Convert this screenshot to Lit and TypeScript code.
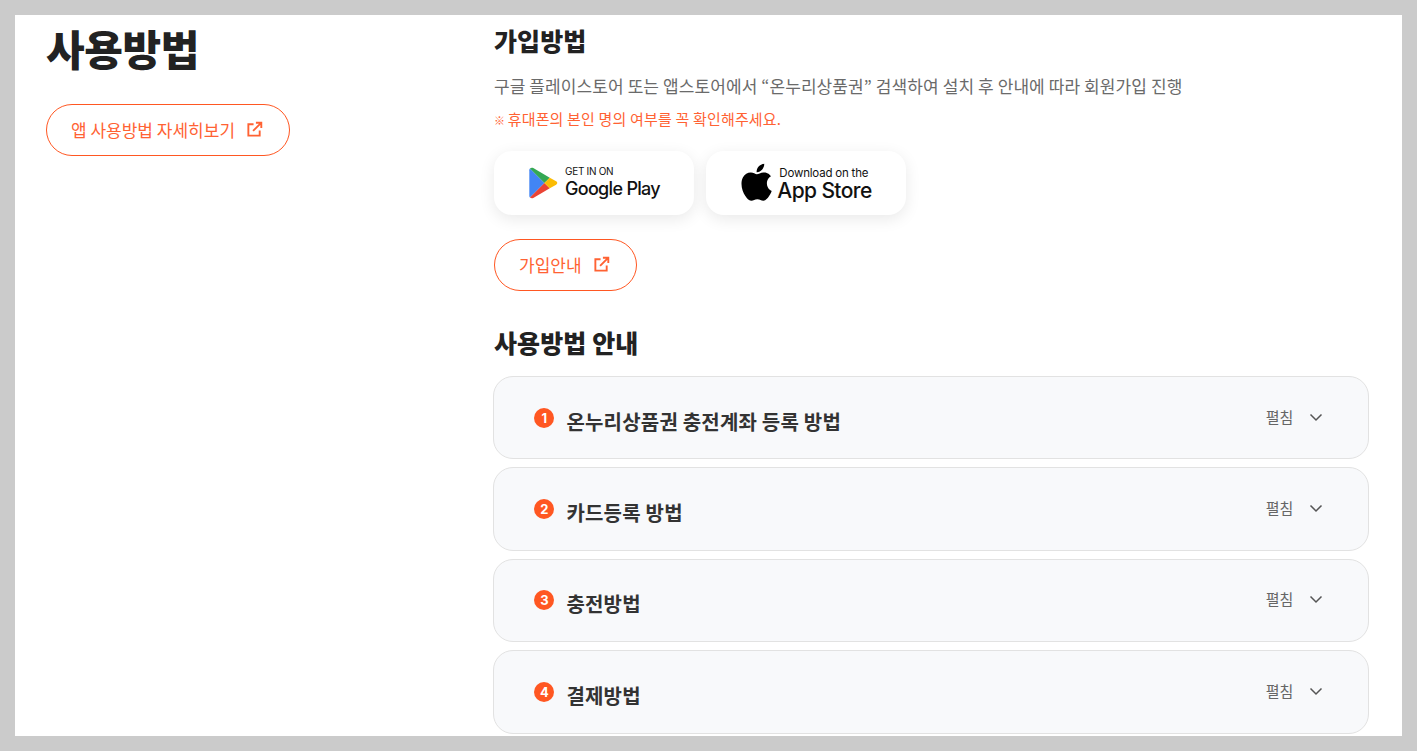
import { LitElement, css, html, svg } from 'lit';
import { customElement } from 'lit/decorators.js';

const linkIcon = html`<svg class="ext" viewBox="0 0 18 18" fill="none" stroke="currentColor" stroke-width="2">
  <path d="M8 3.500H2.500v12h12V10"/><path d="M7.500 10.500L16 2M10.500 1.800h5.700v5.700"/>
</svg>`;

const playIcon = svg`<svg class="play" viewBox="0 0 30 33">
  <path d="M1 1.500C.5 2 .3 2.600.3 3.400v26.200c0 .8.2 1.400.7 1.900L16 16.500z" fill="#4285f4"/>
  <path d="M1 1.500c1-.9 2.300-1 3.400-.4L21.500 11 16 16.500z" fill="#34a853"/>
  <path d="M1 31.500c1 .9 2.300 1 3.400.4L21.500 22 16 16.500z" fill="#ea4335"/>
  <path d="M21.500 11l6.600 3.800c1.500.9 1.500 2.500 0 3.400L21.500 22 16 16.500z" fill="#fbbc04"/>
</svg>`;

const appleIcon = svg`<svg class="apple" viewBox="3.500 3 27.500 33">
  <path fill="#000" d="M26.600 20.200c0-4 3.300-6 3.500-6.100-1.900-2.800-4.900-3.200-5.900-3.200-2.500-.3-4.900 1.500-6.200 1.500-1.300 0-3.200-1.500-5.300-1.400-2.700 0-5.200 1.600-6.600 4-2.800 4.900-.7 12.100 2 16.100 1.400 1.900 3 4.100 5.100 4 2-.1 2.800-1.300 5.200-1.300 2.400 0 3.100 1.300 5.200 1.300 2.200 0 3.600-2 4.900-3.900 1.500-2.200 2.200-4.400 2.200-4.500-.1 0-4.100-1.600-4.100-6.500z"/>
  <path fill="#000" d="M22.600 8.400c1.100-1.400 1.900-3.200 1.700-5.100-1.600.1-3.600 1.100-4.800 2.500-1 1.200-1.900 3.100-1.700 4.900 1.800.1 3.600-.9 4.800-2.300z"/>
</svg>`;

const steps = ['온누리상품권 충전계좌 등록 방법', '카드등록 방법', '충전방법', '결제방법'];

@customElement('app-root')
export class AppRoot extends LitElement {
  static styles = css`
    :host {
      display: block;
      box-sizing: border-box;
      height: 751px;
      overflow: hidden;
      border: 15px solid #cbcbcb;
      background: #fff;
      font-family: 'Noto Sans CJK KR', 'Noto Sans', sans-serif;
      color: #222;
    }
    .page {
      display: grid;
      grid-template-columns: 478px 876px;
      height: 100%;
      overflow: hidden;
    }
    .side {
      padding: 3px 0 0 31px;
    }
    h1 {
      margin: 0;
      font-size: 42px;
      line-height: 60px;
      font-weight: 900;
      letter-spacing: -0.4px;
      color: #222;
    }
    .outline {
      display: inline-flex;
      align-items: center;
      box-sizing: border-box;
      height: 52px;
      padding: 0 26px 2px 24px;
      border: 1px solid #ff5722;
      border-radius: 26px;
      background: #fff;
      color: #ff6233;
      font-size: 17px;
      font-weight: 400;
      white-space: nowrap;
    }
    .side .outline {
      margin-top: 26px;
    }
    .ext {
      width: 17px;
      height: 17px;
      margin: 1px 0 0 11px;
      flex: none;
    }
    .main {
      padding-top: 8px;
    }
    h2 {
      margin: 0 0 0 1px;
      font-size: 25px;
      line-height: 34px;
      font-weight: 800;
      letter-spacing: 0.1px;
      color: #222;
    }
    .desc {
      margin: 17px 0 0 1px;
      font-size: 17px;
      line-height: 24px;
      letter-spacing: 0.09px;
      color: #6a6a6a;
    }
    .warn {
      margin: 11px 0 0 1px;
      font-size: 15px;
      line-height: 20px;
      letter-spacing: 0.17px;
      color: #ff6233;
    }
    .mark {
      font-size: 11px;
      margin-right: -1px;
    }
    .stores {
      display: flex;
      gap: 12px;
      margin: 21px 0 0 1px;
    }
    .store {
      display: flex;
      align-items: center;
      justify-content: center;
      width: 200px;
      height: 64px;
      border-radius: 18px;
      background: #fff;
      box-shadow: 0 4px 16px rgba(0, 0, 0, 0.09);
      color: #111;
      font-family: Inter, Roboto, sans-serif;
    }
    .play {
      width: 29px;
      height: 32px;
      margin: 0 7px 0 1px;
    }
    .apple {
      width: 32px;
      height: 39px;
      margin: -1px 5px 0 0;
    }
    .store-text {
      display: flex;
      flex-direction: column;
    }
    .small {
      font-size: 10px;
      line-height: 11px;
      font-weight: 400;
      letter-spacing: -0.3px;
    }
    .big {
      font-size: 18px;
      line-height: 23px;
      font-weight: 500;
      letter-spacing: -0.7px;
    }
    .apple-text {
      padding-top: 3px;
    }
    .apple-text .small {
      font-size: 11.500px;
      line-height: 12px;
      margin-left: 2px;
      letter-spacing: -0.2px;
    }
    .apple-text .big {
      font-size: 21px;
      line-height: 24px;
      letter-spacing: -0.6px;
    }
    .join {
      margin: 24px 0 0 1px;
    }
    .guide {
      margin-top: 34px;
    }
    .list {
      display: flex;
      flex-direction: column;
      gap: 8px;
      margin-top: 17px;
    }
    .item {
      display: flex;
      align-items: center;
      box-sizing: border-box;
      height: 83.4px;
      padding: 0 43.600px 0 40.400px;
      border: 1px solid #e2e2e2;
      border-radius: 20px;
      background: #f8f9fb;
    }
    .num {
      display: flex;
      align-items: center;
      justify-content: center;
      width: 20px;
      height: 20px;
      margin: 0 12px 0 0;
      border-radius: 50%;
      background: #ff5722;
      color: #fff;
      font-size: 13px;
      font-weight: 700;
      line-height: 20px;
      font-family: Inter, sans-serif;
    }
    .name {
      flex: 1;
      margin-top: 8px;
      font-size: 20px;
      line-height: 30px;
      font-weight: 700;
      letter-spacing: 0.2px;
      color: #333;
    }
    .toggle {
      display: flex;
      align-items: center;
      gap: 15px;
      margin-top: -2px;
      font-size: 15px;
      line-height: 20px;
      color: #666;
    }
    .chev {
      width: 16px;
      height: 16px;
    }
  `;

  render() {
    return html`
      <div class="page">
        <aside class="side">
          <h1>사용방법</h1>
          <a class="outline">앱 사용방법 자세히보기${linkIcon}</a>
        </aside>
        <main class="main">
          <h2>가입방법</h2>
          <p class="desc">구글 플레이스토어 또는 앱스토어에서 “온누리상품권” 검색하여 설치 후 안내에 따라 회원가입 진행</p>
          <p class="warn"><span class="mark">※</span> 휴대폰의 본인 명의 여부를 꼭 확인해주세요.</p>
          <div class="stores">
            <div class="store">
              ${playIcon}
              <div class="store-text"><span class="small">GET IN ON</span><span class="big">Google Play</span></div>
            </div>
            <div class="store">
              ${appleIcon}
              <div class="store-text apple-text"><span class="small">Download on the</span><span class="big">App Store</span></div>
            </div>
          </div>
          <a class="outline join">가입안내${linkIcon}</a>
          <h2 class="guide">사용방법 안내</h2>
          <div class="list">
            ${steps.map(
              (s, i) => html`
                <div class="item">
                  <span class="num">${i + 1}</span>
                  <span class="name">${s}</span>
                  <span class="toggle">펼침
                    <svg class="chev" viewBox="0 0 16 16" fill="none" stroke="#555" stroke-width="1.500">
                      <path d="M2.500 5.500L8 11l5.500-5.500"/>
                    </svg>
                  </span>
                </div>
              `
            )}
          </div>
        </main>
      </div>
    `;
  }
}
